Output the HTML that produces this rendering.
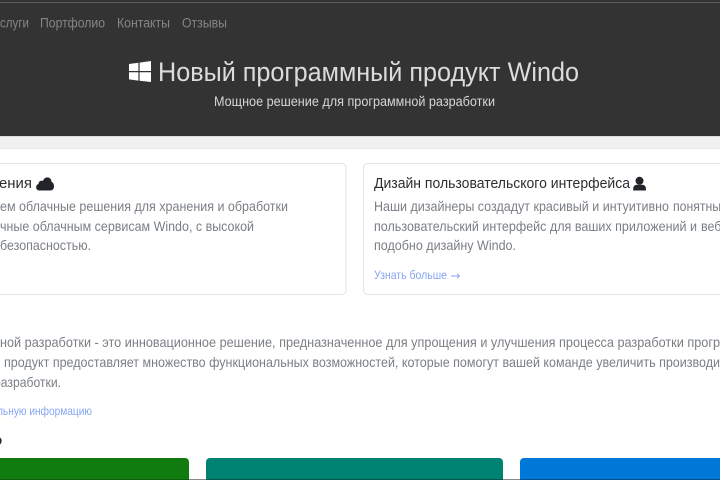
<!DOCTYPE html>
<html lang="ru">
<head>
<meta charset="utf-8">
<title>Windo</title>
<style>
html,body{margin:0;padding:0;width:720px;height:480px;overflow:hidden;background:#fff}
svg{display:block}
text{font-family:"Liberation Sans",sans-serif;white-space:pre}
.nav{font-size:13.5px;fill:#868686}
.body{font-size:13.6px;fill:#7a7f85}
.head{font-size:15px;fill:#2b2f33}
.link{font-size:12px;fill:#86a4f3}
</style>
</head>
<body>
<svg width="720" height="480" viewBox="0 0 720 480" xmlns="http://www.w3.org/2000/svg">
<rect width="720" height="480" fill="#fff"/>
<rect width="720" height="136" fill="#333"/>
<rect y="2" width="720" height="1" fill="#5c5c5c"/>
<rect y="136" width="720" height="13" fill="#f0f0f0"/>
<rect y="136" width="720" height="1" fill="#dcdcdc"/>
<rect y="148" width="720" height="1" fill="#e6e6e6"/>

<text class="nav" x="0" y="27.5" textLength="29" lengthAdjust="spacingAndGlyphs">слуги</text>
<text class="nav" x="40" y="27.5" textLength="65" lengthAdjust="spacingAndGlyphs">Портфолио</text>
<text class="nav" x="117" y="27.5" textLength="53" lengthAdjust="spacingAndGlyphs">Контакты</text>
<text class="nav" x="182" y="27.5" textLength="45" lengthAdjust="spacingAndGlyphs">Отзывы</text>

<path d="M129 64 L138.4 62.8 V71 H129 Z M139.6 62.6 L151 61 V71 H139.6 Z M129 72.2 H138.4 V80.6 L129 79.4 Z M139.6 72.2 H151 V82 L139.6 80.8 Z" fill="#fff"/>
<text x="158" y="81" font-size="27" fill="#dcdcdc" textLength="421" lengthAdjust="spacingAndGlyphs">Новый программный продукт Windo</text>
<text x="214" y="106" font-size="13.5" fill="#d6d6d6" textLength="281" lengthAdjust="spacingAndGlyphs">Мощное решение для программной разработки</text>

<rect x="-20" y="163.5" width="366" height="131" rx="4" fill="#fff" stroke="#e3e3e3"/>
<rect x="363.5" y="163.5" width="400" height="131" rx="4" fill="#fff" stroke="#e3e3e3"/>

<text class="head" x="-1" y="188" textLength="33" lengthAdjust="spacingAndGlyphs">ения</text>
<path d="M39.5 190.5 C35.5 190.5 35 185 38.5 184 C38.5 181.2 41.5 180 43 181 C44.5 176 51.2 176.2 51.6 182 C55 183 55 190.5 50.5 190.5 Z" fill="#212529"/>
<text class="body" x="0" y="211" textLength="288" lengthAdjust="spacingAndGlyphs">ем облачные решения для хранения и обработки</text>
<text class="body" x="0" y="231" textLength="254" lengthAdjust="spacingAndGlyphs">чные облачным сервисам Windo, с высокой</text>
<text class="body" x="0" y="250" textLength="91" lengthAdjust="spacingAndGlyphs">безопасностью.</text>

<text class="head" x="374" y="188" textLength="256" lengthAdjust="spacingAndGlyphs">Дизайн пользовательского интерфейса</text>
<circle cx="639.5" cy="180.8" r="4" fill="#212529"/>
<path d="M633.2 190.5 V188.6 C633.2 185.8 635.4 184.8 637 184.8 H642 C643.8 184.8 645.9 185.8 645.9 188.6 V190.5 Z" fill="#212529"/>
<text class="body" x="374" y="211" textLength="295" lengthAdjust="spacingAndGlyphs">Наши дизайнеры создадут красивый и интуитивно</text>
<text class="body" x="673" y="211" textLength="55" lengthAdjust="spacingAndGlyphs">понятный</text>
<text class="body" x="374" y="231" textLength="323" lengthAdjust="spacingAndGlyphs">пользовательский интерфейс для ваших приложений и</text>
<text class="body" x="701" y="231" textLength="64" lengthAdjust="spacingAndGlyphs">веб-сайтов</text>
<text class="body" x="374" y="250" textLength="142" lengthAdjust="spacingAndGlyphs">подобно дизайну Windo.</text>
<text class="link" x="374" y="279" textLength="73" lengthAdjust="spacingAndGlyphs">Узнать больше</text>
<text x="450.5" y="279.5" font-size="11.5" fill="#86a4f3" style="font-family:'DejaVu Sans',sans-serif" textLength="10" lengthAdjust="spacingAndGlyphs">→</text>

<text class="body" x="0" y="347" textLength="720" lengthAdjust="spacingAndGlyphs">ной разработки - это инновационное решение, предназначенное для упрощения и улучшения процесса разработки прогр</text>
<text class="body" x="4" y="367" textLength="716" lengthAdjust="spacingAndGlyphs">продукт предоставляет множество функциональных возможностей, которые помогут вашей команде увеличить производи</text>
<text class="body" x="-6" y="387" textLength="67" lengthAdjust="spacingAndGlyphs">разработки.</text>
<text class="link" x="-3" y="415" textLength="95" lengthAdjust="spacingAndGlyphs">льную информацию</text>
<text x="-7" y="445" font-size="15" font-weight="bold" fill="#212529">о</text>

<rect x="-20" y="458" width="209" height="40" rx="4" fill="#107c10"/>
<rect x="206" y="458" width="297" height="40" rx="4" fill="#008272"/>
<rect x="520" y="458" width="240" height="40" rx="4" fill="#0078d7"/>
<rect y="479" width="720" height="1" fill="#8c8c8c"/>
<rect y="479" width="189" height="1" fill="#0f5c0f"/>
<rect x="206" y="479" width="297" height="1" fill="#04574d"/>
<rect x="520" y="479" width="200" height="1" fill="#05508f"/>
</svg>
</body>
</html>
